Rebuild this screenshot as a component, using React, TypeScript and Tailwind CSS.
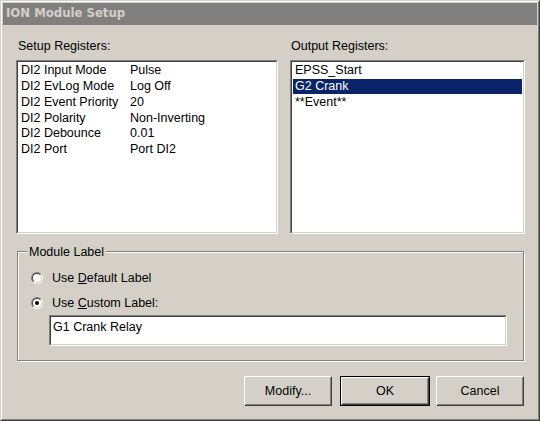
import React from "react";

const FONT = { fontFamily: '"Liberation Sans", Arial, sans-serif' };

const setupRows: [string, string][] = [
  ["DI2 Input Mode", "Pulse"],
  ["DI2 EvLog Mode", "Log Off"],
  ["DI2 Event Priority", "20"],
  ["DI2 Polarity", "Non-Inverting"],
  ["DI2 Debounce", "0.01"],
  ["DI2 Port", "Port DI2"],
];

const outputRows = ["EPSS_Start", "G2 Crank", "**Event**"];

function Sunken({ className = "", children }: { className?: string; children?: React.ReactNode }) {
  return (
    <div className={`border border-t-[#808080] border-l-[#808080] border-r-white border-b-white ${className}`}>
      <div className="h-full w-full border border-t-[#404040] border-l-[#404040] border-r-[#d4d0c8] border-b-[#d4d0c8] bg-white">
        {children}
      </div>
    </div>
  );
}

function Radio({ checked, children }: { checked?: boolean; children: React.ReactNode }) {
  return (
    <div className="flex h-[16px] items-center">
      <div className="ml-[13px] h-[12px] w-[12px] rounded-full border border-t-[#808080] border-l-[#808080] border-r-white border-b-white">
        <div className="flex h-full w-full items-center justify-center rounded-full border border-t-[#404040] border-l-[#404040] border-r-[#d4d0c8] border-b-[#d4d0c8] bg-white">
          {checked && <div className="h-[4px] w-[4px] rounded-full bg-black" />}
        </div>
      </div>
      <span className="ml-[9px] text-[12.5px] leading-[16px] text-black">{children}</span>
    </div>
  );
}

function Button({ label, isDefault }: { label: string; isDefault?: boolean }) {
  const face = (
    <div className="h-full w-full border border-t-white border-l-white border-r-[#404040] border-b-[#404040]">
      <div className="flex h-full w-full items-center justify-center border border-t-[#d4d0c8] border-l-[#d4d0c8] border-r-[#808080] border-b-[#808080] text-[12.5px] text-black">
        {label}
      </div>
    </div>
  );
  if (isDefault) {
    return <div className="h-[30px] w-[90px] border border-black">{face}</div>;
  }
  return <div className="h-[30px] w-[88px]">{face}</div>;
}

export default function App() {
  return (
    <div style={FONT} className="h-[421px] w-[540px] border border-t-[#d4d0c8] border-l-[#d4d0c8] border-r-[#404040] border-b-[#404040] bg-[#d4d0c8]">
      <div className="flex h-full w-full flex-col border border-t-white border-l-white border-r-[#808080] border-b-[#808080] p-[1px]">
        {/* TITLE BAR */}
        <div
          className="flex h-[22px] shrink-0 items-center bg-[#808080] pl-[3px] text-[11.7px] font-bold text-[#d4d0c8]"
          style={{ fontFamily: '"DejaVu Sans", Verdana, sans-serif' }}
        >
          ION Module Setup
        </div>

        <div className="flex flex-col pl-[13px] pr-[12px]">
          {/* REGISTER LISTS */}
          <div className="mt-[13px] grid grid-cols-[262px_235px] gap-x-[12px]">
            <div className="flex flex-col">
              <div className="pl-[2px] text-[12.5px] leading-[16px] text-black">Setup Registers:</div>
              <Sunken className="mt-[6px] h-[174px]">
                <div className="pl-[3px] pt-[1px]">
                  {setupRows.map(([name, value]) => (
                    <div key={name} className="flex h-[15.7px] items-center text-[12.5px] text-black">
                      <span className="w-[109px] shrink-0 whitespace-nowrap">{name}</span>
                      <span className="whitespace-nowrap">{value}</span>
                    </div>
                  ))}
                </div>
              </Sunken>
            </div>
            <div className="flex flex-col">
              <div className="pl-[1px] text-[12.5px] leading-[16px] text-black">Output Registers:</div>
              <Sunken className="mt-[6px] h-[174px]">
                <div className="px-[1px] pt-[1px]">
                  {outputRows.map((row, i) => (
                    <div
                      key={row}
                      className={`flex h-[15.7px] items-center pl-[2px] text-[12.5px] ${
                        i === 1 ? "bg-[#0a246a] text-white" : "text-black"
                      }`}
                    >
                      {row}
                    </div>
                  ))}
                </div>
              </Sunken>
            </div>
          </div>

          {/* MODULE LABEL GROUP */}
          <div className="relative ml-[1px] mt-[17px] h-[110px] w-[507px] border border-[#808080] shadow-[inset_1px_1px_0_#fff,1px_1px_0_#fff]">
            <div className="absolute -top-[8px] left-[9px] bg-[#d4d0c8] px-[2px] text-[12.5px] leading-[16px] text-black">
              Module Label
            </div>
            <div className="mt-[18px]">
              <Radio>
                Use <span className="underline">D</span>efault Label
              </Radio>
            </div>
            <div className="mt-[9px]">
              <Radio checked>
                Use <span className="underline">C</span>ustom Label:
              </Radio>
            </div>
            <Sunken className="ml-[31px] mt-[4px] h-[31px] w-[458px]">
              <div className="pl-[2px] pt-[2px] text-[12.5px] leading-[16px] text-black">G1 Crank Relay</div>
            </Sunken>
          </div>

          {/* BUTTONS */}
          <div className="mt-[15px] flex justify-end pr-[1px]">
            <Button label="Modify..." />
            <div className="ml-[8px]">
              <Button label="OK" isDefault />
            </div>
            <div className="ml-[6px]">
              <Button label="Cancel" />
            </div>
          </div>
        </div>
      </div>
    </div>
  );
}
